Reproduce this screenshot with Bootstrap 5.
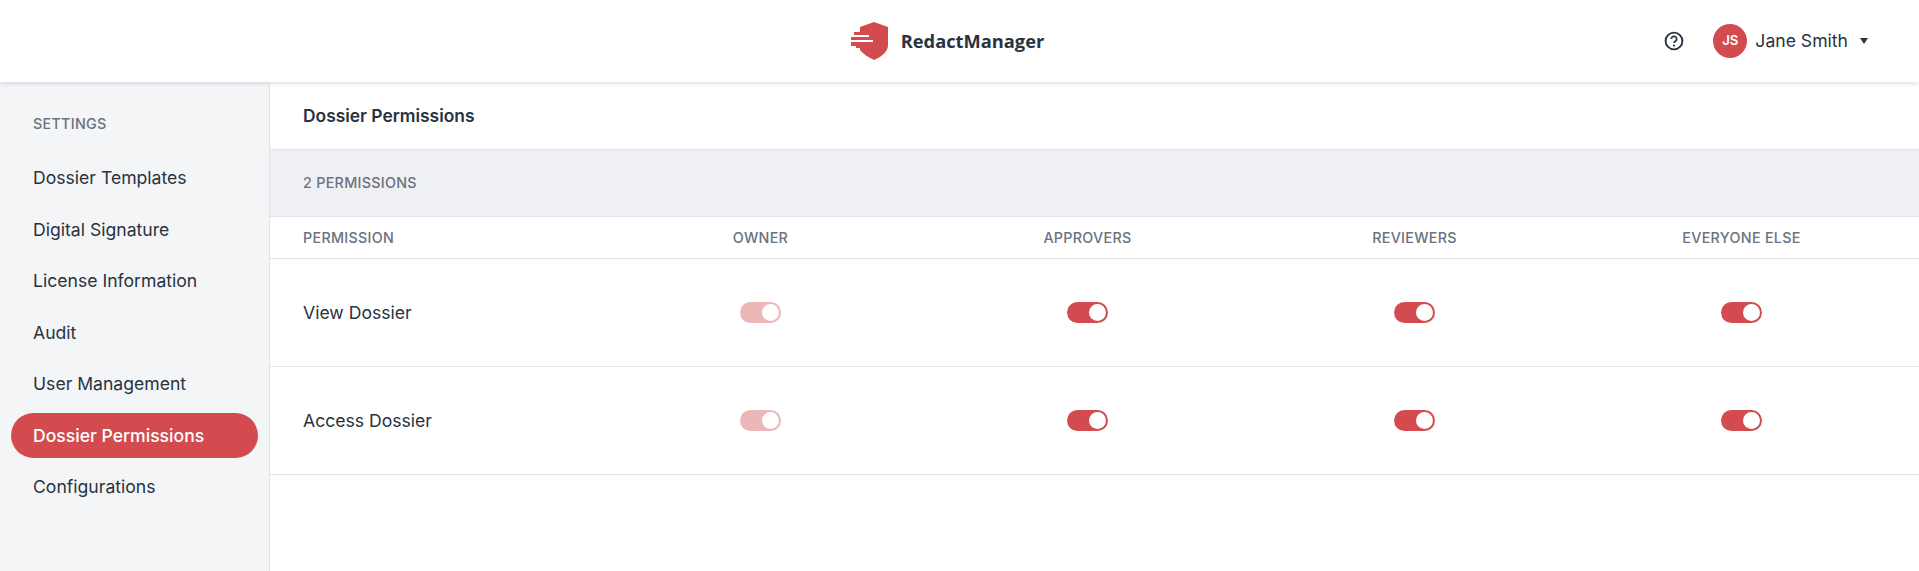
<!doctype html>
<html lang="en">
<head>
<meta charset="utf-8">
<title>Dossier Permissions</title>
<link href="https://cdn.jsdelivr.net/npm/bootstrap@5.3.0/dist/css/bootstrap.min.css" rel="stylesheet">
<style>
html,body{height:100%;overflow:hidden}
body{font-family:Inter,"Liberation Sans",sans-serif;color:#283241;background:#fff;font-size:15px}
.topbar{height:82px;display:grid;grid-template-columns:1fr auto 1fr;align-items:center;background:#fff;box-shadow:0 2px 4px rgba(40,50,65,.14);position:relative;z-index:2}
.brand{margin-right:24px;gap:12px}
.brand-name{font-family:"Open Sans","Liberation Sans",sans-serif;font-weight:700;font-size:18.3px;color:#283241}
.usr{padding-right:51px}
.avatar{width:34px;height:34px;border-radius:50%;background:#d34b4e;color:#fff;font-size:13.2px;font-weight:600}
.uname{font-size:17.6px;margin-left:8px}
.caret{width:0;height:0;border-left:4.5px solid transparent;border-right:4.5px solid transparent;border-top:6px solid #283241;margin-left:12px}
.helpico{margin-right:29px}
.shell{height:489px}
.sidepanel{width:270px;flex:none;background:#f4f5f7;border-right:1px solid #e2e4e9;padding:32px 11px 0}
.side-title{font-size:14.3px;font-weight:500;color:#6b7280;letter-spacing:.3px;margin:0 0 21px 22px;line-height:20px}
.side-link{display:block;height:45px;line-height:45px;padding:0 22px;border-radius:23px;color:#283241;font-size:17.6px;font-weight:400;text-decoration:none;margin-bottom:6.5px}
.side-link.on{background:#d34b4e;color:#fff;font-weight:500}
.main-title{height:68px;padding:0 33px;border-bottom:1px solid #e2e4e9;font-size:17.4px;font-weight:600;line-height:1;display:flex;align-items:center}
.count-bar{height:67px;padding:0 33px;background:#eff0f4;border-bottom:1px solid #e2e4e9;font-size:14.3px;font-weight:500;color:#6b7280;letter-spacing:.3px;display:flex;align-items:center}
.perm-row{display:grid;grid-template-columns:repeat(5,327px);border-bottom:1px solid #e2e4e9;align-items:center}
.perm-head{height:42px;font-size:14.3px;font-weight:500;color:#6b7280;letter-spacing:.3px}
.perm-body{height:108px;font-size:17.6px}
.perm-row>div:first-child{padding-left:33px;text-align:left}
.perm-body>div:first-child{padding-top:2px}
.perm-row>div{text-align:center}
.perm-row .form-check{padding:0;margin:0;min-height:0;display:flex;justify-content:center}
.form-switch .form-check-input.tog,.form-switch .form-check-input.tog:checked{width:41px;height:21px;margin:0;float:none;background-color:#d34b4e;border:0;background-position:right 2px center;background-size:17px 17px;background-image:url("data:image/svg+xml,%3csvg xmlns='http://www.w3.org/2000/svg' viewBox='0 0 8 8'%3e%3ccircle cx='4' cy='4' r='4' fill='%23fff'/%3e%3c/svg%3e");box-shadow:none}
.form-switch .form-check-input.tog:disabled{opacity:.4}
</style>
</head>
<body>
<header class="topbar">
  <div></div>
  <div class="brand d-flex align-items-center">
    <svg width="38" height="38" viewBox="0 0 38 38" aria-hidden="true">
      <path fill="#d34b4e" d="M23 0l14 5v18c0 7-7 12-14 15-6-3-11-6-14-10V5z"/>
      <path fill="#d34b4e" d="M3 10h8v3H3zM0 15h10v3H0zM0 20h10v4H0zM5 24h6v2H5z"/>
      <path fill="#fff" d="M0 13h18v2H0zM0 18h22v2H0z"/>
    </svg>
    <span class="brand-name">RedactManager</span>
  </div>
  <div class="usr d-flex align-items-center justify-content-end">
    <svg class="helpico" width="20" height="20" viewBox="0 0 20 20" fill="none" stroke="#283241" aria-hidden="true"><circle cx="10" cy="10" r="8.4" stroke-width="1.9"/><path d="M7.4 8a2.6 2.6 0 1 1 3.9 2.2c-.9.5-1.3 1-1.3 1.9" stroke-width="1.7"/><circle cx="10" cy="14.6" r="1.1" fill="#283241" stroke="none"/></svg>
    <div class="avatar d-flex align-items-center justify-content-center">JS</div>
    <span class="uname">Jane Smith</span>
    <span class="caret"></span>
  </div>
</header>
<div class="shell d-flex">
  <nav class="sidepanel">
    <div class="side-title">SETTINGS</div>
    <a class="side-link" href="#">Dossier Templates</a>
    <a class="side-link" href="#">Digital Signature</a>
    <a class="side-link" href="#">License Information</a>
    <a class="side-link" href="#">Audit</a>
    <a class="side-link" href="#">User Management</a>
    <a class="side-link on" href="#">Dossier Permissions</a>
    <a class="side-link" href="#">Configurations</a>
  </nav>
  <main class="flex-grow-1">
    <div class="main-title">Dossier Permissions</div>
    <div class="count-bar">2 PERMISSIONS</div>
    <div class="perm-row perm-head">
      <div>PERMISSION</div><div>OWNER</div><div>APPROVERS</div><div>REVIEWERS</div><div>EVERYONE ELSE</div>
    </div>
    <div class="perm-row perm-body">
      <div>View Dossier</div>
      <div><div class="form-check form-switch"><input class="form-check-input tog" type="checkbox" role="switch" checked disabled></div></div>
      <div><div class="form-check form-switch"><input class="form-check-input tog" type="checkbox" role="switch" checked></div></div>
      <div><div class="form-check form-switch"><input class="form-check-input tog" type="checkbox" role="switch" checked></div></div>
      <div><div class="form-check form-switch"><input class="form-check-input tog" type="checkbox" role="switch" checked></div></div>
    </div>
    <div class="perm-row perm-body">
      <div>Access Dossier</div>
      <div><div class="form-check form-switch"><input class="form-check-input tog" type="checkbox" role="switch" checked disabled></div></div>
      <div><div class="form-check form-switch"><input class="form-check-input tog" type="checkbox" role="switch" checked></div></div>
      <div><div class="form-check form-switch"><input class="form-check-input tog" type="checkbox" role="switch" checked></div></div>
      <div><div class="form-check form-switch"><input class="form-check-input tog" type="checkbox" role="switch" checked></div></div>
    </div>
  </main>
</div>
<script src="https://cdn.jsdelivr.net/npm/bootstrap@5.3.0/dist/js/bootstrap.bundle.min.js"></script>
</body>
</html>
